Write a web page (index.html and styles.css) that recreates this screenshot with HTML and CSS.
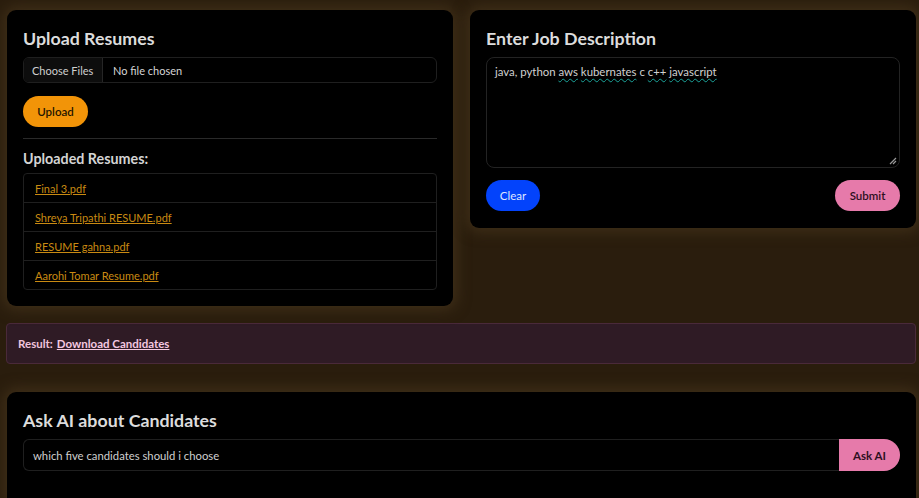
FILE: index.html
```html
<!DOCTYPE html>
<html lang="en">
<head>
<meta charset="utf-8">
<title>Resume Screener</title>
<link rel="stylesheet" href="styles.css">
</head>
<body>
<div class="page">
  <div class="top-grid">
    <section class="card">
      <h2 class="card-title">Upload Resumes</h2>
      <div class="file-input">
        <span class="file-btn">Choose Files</span>
        <span class="file-name">No file chosen</span>
      </div>
      <button class="btn btn-orange">Upload</button>
      <hr class="divider">
      <h3 class="sub-title">Uploaded Resumes:</h3>
      <ul class="file-list">
        <li><a href="#">Final 3.pdf</a></li>
        <li><a href="#">Shreya Tripathi RESUME.pdf</a></li>
        <li><a href="#">RESUME gahna.pdf</a></li>
        <li><a href="#">Aarohi Tomar Resume.pdf</a></li>
      </ul>
    </section>
    <section class="card card-short">
      <h2 class="card-title">Enter Job Description</h2>
      <div class="textarea">java, python <span class="spell">aws</span> <span class="spell">kubernates</span> c <span class="spell">c++</span> <span class="spell">javascript</span>
        <svg class="resize" width="9" height="9" viewBox="0 0 9 9"><path d="M8 2 L2 8 M8 5 L5 8" stroke="#9a9a9a" stroke-width="1.2" fill="none"/></svg>
      </div>
      <div class="btn-row">
        <button class="btn btn-blue">Clear</button>
        <button class="btn btn-pink">Submit</button>
      </div>
    </section>
  </div>
  <div class="result">Result: <a href="#">Download Candidates</a></div>
  <section class="card card-ask">
    <h2 class="card-title">Ask AI about Candidates</h2>
    <div class="ask-row">
      <div class="ask-input">which five candidates should i choose</div>
      <button class="btn btn-pink btn-ask">Ask AI</button>
    </div>
  </section>
</div>
</body>
</html>
```

FILE: styles.css
```css
* { box-sizing: border-box; }
html, body { margin: 0; padding: 0; }
body {
  background: #2a1d0d;
  font-family: "Lato", "Open Sans", sans-serif;
  color: #d8d8d8;
  overflow: hidden;
  height: 498px;
}
.page {
  padding: 10px 3px 0 7px;
  width: 919px;
  height: 498px;
  overflow: hidden;
}
.top-grid {
  display: grid;
  grid-template-columns: 446px 446px;
  column-gap: 17px;
  align-items: start;
}
.card {
  background: #000;
  border-radius: 9px;
  padding: 16px;
  box-shadow: 0 0 14px 4px rgba(70, 52, 28, 0.75);
}
.card-title {
  margin: 0 0 7px 0;
  font-size: 17.8px;
  line-height: 24px;
  font-weight: 700;
  color: #dcdcdc;
}
.file-input {
  display: flex;
  height: 26px;
  border: 1px solid #1f1f1f;
  border-radius: 6px;
  font-size: 11px;
  overflow: hidden;
}
.file-btn {
  display: flex;
  align-items: center;
  padding: 0 8px;
  width: 79px;
  background: #0d0d0d;
  border-right: 1px solid #262626;
  color: #cfcfcf;
}
.file-name {
  display: flex;
  align-items: center;
  padding-left: 10px;
  color: #d6d6d6;
}
.btn {
  border: none;
  border-radius: 16px;
  font-family: inherit;
  font-size: 11.5px;
  height: 31px;
  padding: 0;
  cursor: pointer;
  white-space: nowrap;
}
.btn-orange {
  margin-top: 13px;
  background: #f29408;
  color: #241400;
  width: 65px;
  font-weight: 600;
}
.btn-blue {
  background: #0343fb;
  color: #dfe6ff;
  width: 54px;
}
.btn-pink {
  background: #e67aaa;
  color: #2e0f1f;
  width: 65px;
  font-weight: 600;
}
.divider {
  border: none;
  border-top: 1.5px solid #2a2a2a;
  margin: 11px 0 10px 0;
}
.sub-title {
  margin: 0 0 4px 0;
  font-size: 14.3px;
  line-height: 20px;
  font-weight: 700;
  color: #d4d4d4;
}
.file-list {
  list-style: none;
  margin: 0;
  padding: 0;
  border: 1px solid #1f1f1f;
  border-radius: 4px;
}
.file-list li {
  height: 29px;
  display: flex;
  align-items: center;
  padding-left: 11px;
  border-top: 1px solid #1f1f1f;
  font-size: 11px;
}
.file-list li:first-child { border-top: none; height: 28px; }
.file-list a {
  color: #c98a12;
  text-decoration: underline;
}
.card-short { padding-bottom: 17px; }
.textarea {
  position: relative;
  height: 111px;
  border: 1px solid #232323;
  border-radius: 8px;
  padding: 5px 8px;
  font-size: 11.4px;
  line-height: 17px;
  color: #d0d0d0;
}
.spell {
  text-decoration: underline wavy #1aa39a;
  text-decoration-thickness: 1px;
  text-underline-offset: 2px;
}
.resize {
  position: absolute;
  right: 2px;
  bottom: 2px;
}
.btn-row {
  display: flex;
  justify-content: space-between;
  margin-top: 12px;
}
.result {
  margin-top: 17px;
  height: 41px;
  background: #2f1b25;
  border: 1px solid #4a2a3a;
  border-radius: 4px;
  display: flex;
  align-items: center;
  padding-left: 11px;
  font-size: 11.5px;
  font-weight: 700;
  color: #efc4dc;
  margin-left: -1px;
}
.result a {
  color: #f4c8e0;
  margin-left: 4px;
  text-decoration: underline;
}
.card-ask {
  margin-top: 28px;
  height: 107px;
  border-radius: 9px 9px 0 0;
}
.ask-row {
  display: flex;
  margin-top: 2px;
}
.ask-input {
  flex: 1;
  height: 32px;
  border: 1px solid #1f1f1f;
  border-right: none;
  border-radius: 6px 0 0 6px;
  display: flex;
  align-items: center;
  padding-left: 9px;
  font-size: 11.3px;
  color: #cfcfcf;
}
.btn-ask {
  height: 32px;
  width: 61px;
  border-radius: 0 16px 16px 0;
  font-weight: 700;
}
```
